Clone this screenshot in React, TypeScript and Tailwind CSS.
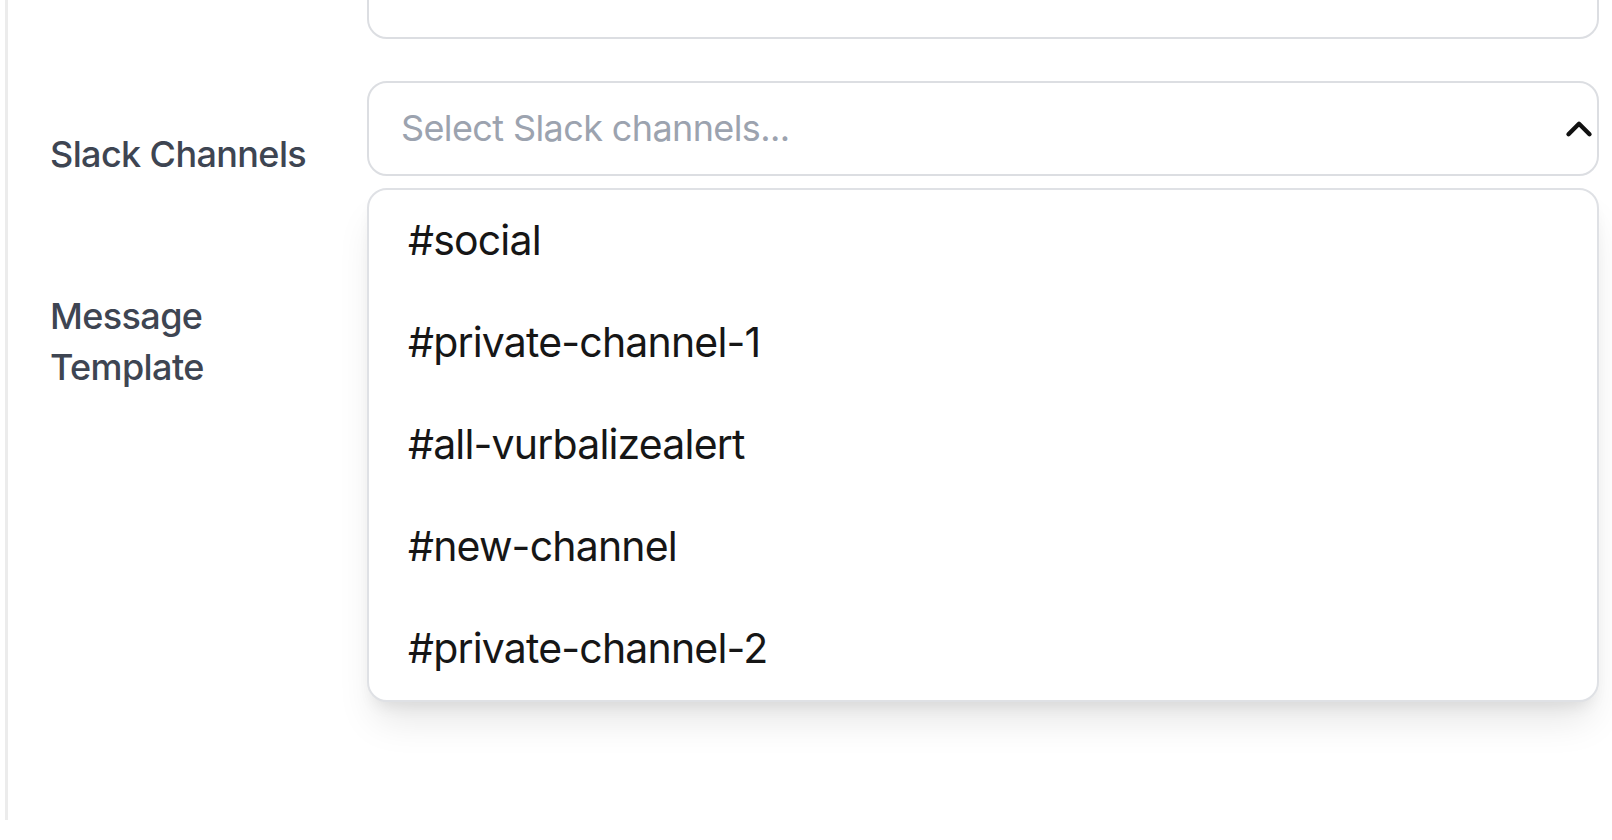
import React from 'react';
import { ChevronUp } from 'lucide-react';

const channels = [
  '#social',
  '#private-channel-1',
  '#all-vurbalizealert',
  '#new-channel',
  '#private-channel-2',
];

const App: React.FC = () => {
  return (
    <div
      className="h-[840px] w-[1612px] overflow-hidden bg-white"
      style={{ fontFamily: 'Inter, "Noto Sans", sans-serif' }}
    >
      <div className="ml-[5px] flex h-[820px] flex-col border-l-[3px] border-[#ececec] pl-[42px] pr-[13px]">
        {/* Field above, scrolled mostly out of view */}
        <div className="-mt-[61px] flex">
          <div className="w-[317px] shrink-0" />
          <div className="h-[100px] flex-1 rounded-[20px] border-2 border-[#dcdee2] bg-white" />
        </div>

        {/* Slack Channels */}
        <div className="mt-[42px] flex">
          <label className="w-[317px] shrink-0 pt-[48px] pr-[32px] text-[36px] font-medium leading-[51px] tracking-[-0.017em] text-[#3e4552]">
            Slack Channels
          </label>
          <div className="relative flex-1">
            <button className="flex h-[95px] w-full items-center justify-between rounded-[20px] border-2 border-[#dcdee2] bg-white pl-[32px] text-left">
              <span className="text-[36px] leading-[51px] tracking-[-0.017em] text-[#9ca3af]">
                Select Slack channels...
              </span>
              <ChevronUp size={42} strokeWidth={2.5} className="-mr-[3px] text-[#111111]" />
            </button>

            {/* Open dropdown */}
            <div className="absolute top-[107px] left-0 right-0 z-10 rounded-[20px] border-2 border-[#dfe1e5] bg-white shadow-[0_26px_38px_-8px_rgba(0,0,0,0.1),0_10px_15px_-6px_rgba(0,0,0,0.08)]">
              {channels.map((channel) => (
                <div
                  key={channel}
                  className="flex h-[102px] items-center px-[39px] text-[41px] tracking-[-0.02em] text-[#161616]"
                >
                  {channel}
                </div>
              ))}
            </div>
          </div>
        </div>

        {/* Message Template */}
        <div className="mt-[111px] flex">
          <label className="w-[285px] shrink-0 text-[36px] font-medium leading-[51px] tracking-[-0.017em] text-[#3e4552]">
            Message Template
          </label>
          <div className="ml-[32px] flex-1">
            <textarea className="h-[300px] w-full resize-none rounded-[20px] border-2 border-[#dcdee2]" />
          </div>
        </div>
      </div>
    </div>
  );
};

export default App;
